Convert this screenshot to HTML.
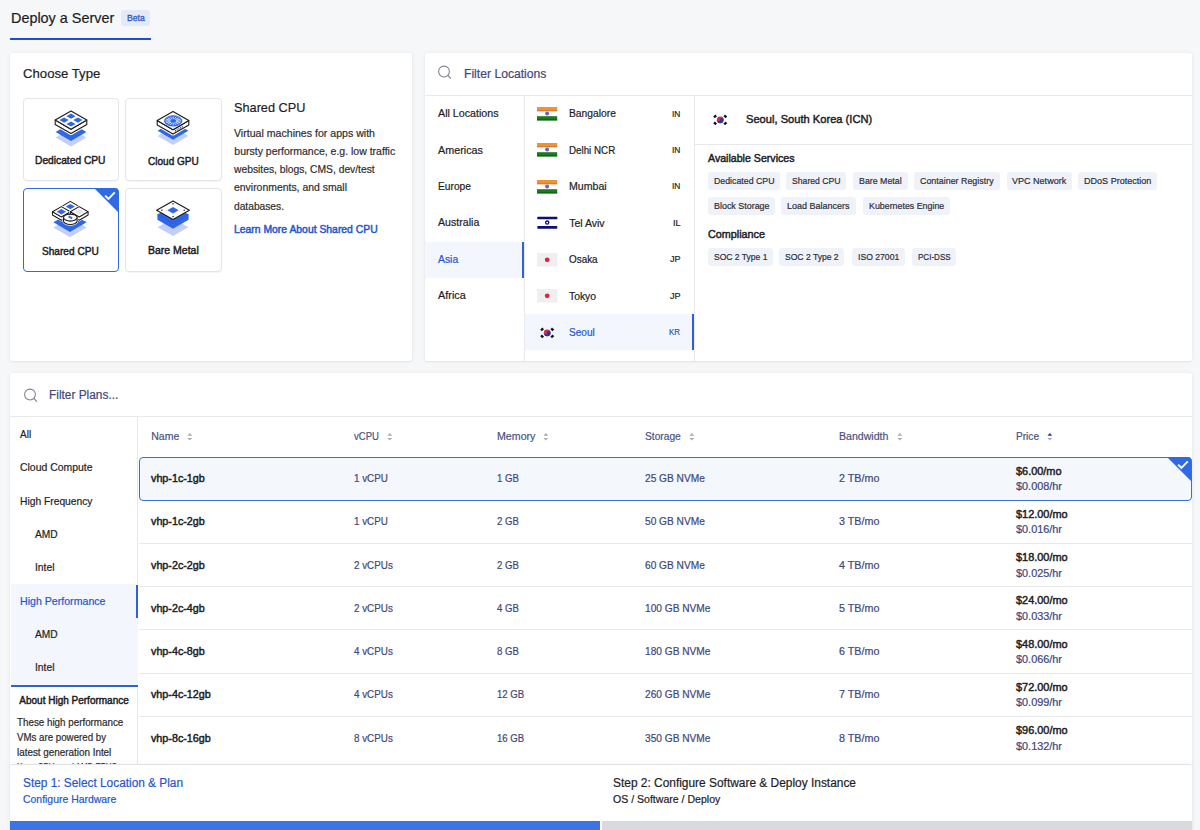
<!DOCTYPE html>
<html><head><meta charset="utf-8"><style>
html,body{margin:0;padding:0;}
body{width:1200px;height:830px;overflow:hidden;position:relative;background:#f6f7f9;font-family:"Liberation Sans",sans-serif;}
.t{position:absolute;white-space:nowrap;line-height:1;transform-origin:0 0;}
.b{position:absolute;box-sizing:border-box;}
svg{position:absolute;overflow:visible;}
</style></head><body>
<div class="t" style="left:10.70px;top:10.73px;font-size:14.5px;color:#1d1d1f;-webkit-text-stroke:0.2px #1d1d1f;transform:scaleX(0.9926);">Deploy a Server</div>
<div class="b" style="left:120.5px;top:10px;width:29.5px;height:16px;background:#e4e9f6;border-radius:3px;"></div>
<div class="t" style="left:126.80px;top:13.93px;font-size:9.3px;color:#2457c9;-webkit-text-stroke:0.3px #2457c9;transform:scaleX(0.9307);">Beta</div>
<div class="b" style="left:10px;top:37.6px;width:141px;height:2px;background:#1d4fd0;"></div>
<div class="b" style="left:10px;top:52.5px;width:402px;height:308px;background:#fff;border-radius:2px;box-shadow:0 0 5px rgba(0,0,0,.05),0 1px 2px rgba(0,0,0,.06),0 0 1px rgba(0,0,0,.06);"></div>
<div class="t" style="left:22.70px;top:67.07px;font-size:13.5px;color:#1d1d1f;-webkit-text-stroke:0.2px #1d1d1f;transform:scaleX(0.9746);">Choose Type</div>
<div class="b" style="left:22.5px;top:97.5px;width:96px;height:83.5px;background:#fff;border:1px solid #e4e5e9;border-radius:4px;box-shadow:0 1px 1px rgba(0,0,0,.04);"></div>
<div class="b" style="left:125.2px;top:97.5px;width:96.5px;height:83.5px;background:#fff;border:1px solid #e4e5e9;border-radius:4px;box-shadow:0 1px 1px rgba(0,0,0,.04);"></div>
<div class="b" style="left:22.5px;top:188px;width:96px;height:83.5px;background:#fff;border:1.5px solid #2f6ae6;border-radius:4px;"></div>
<div class="b" style="left:125.2px;top:188px;width:96.5px;height:83.5px;background:#fff;border:1px solid #e4e5e9;border-radius:4px;box-shadow:0 1px 1px rgba(0,0,0,.04);"></div>
<svg style="left:94.4px;top:187.5px" width="25" height="25" viewBox="0 0 25 25"><path d="M0 0 H20.5 Q24.5 0 24.5 4 V24.5 Z" fill="#2f6ae6"/><path d="M11.1 7.6 L14.4 10.8 L20.8 4.4" stroke="#fff" stroke-width="1.9" fill="none"/></svg>
<svg style="left:50.900000000000006px;top:110.0px" width="40" height="40" viewBox="-20 0 40 40"><path d="M-15.4 27.6 L0 18.6 L15.4 27.6 L0 36.6 Z" fill="#c3cff5"/><path d="M-15.4 22.0 L0 13.0 L15.4 22.0 L0 31.0 Z" fill="#2e68e8"/><path d="M-15.8 10.1 V14.5 L0 23.6 L15.8 14.5 V10.1 L0 1.0 Z" fill="#fff" stroke="#fff" stroke-width="3" stroke-linejoin="round"/><path d="M-15.8 10.1 V14.5 L0 23.6 L15.8 14.5 V10.1 L0 19.2 Z" fill="#fff" stroke="#1a1a1a" stroke-width="1.1" stroke-linejoin="round"/><path d="M0 1.0 L15.8 10.1 L0 19.2 L-15.8 10.1 Z" fill="#fff" stroke="#1a1a1a" stroke-width="1.1" stroke-linejoin="round"/><path d="M-4.6 6.199999999999999 L0 3.599999999999999 L4.6 6.199999999999999 L0 8.799999999999999 Z" fill="#2e68e8"/><path d="M-11.5 10.1 L-6.9 7.5 L-2.3000000000000007 10.1 L-6.9 12.7 Z" fill="#2e68e8"/><path d="M2.3000000000000007 10.1 L6.9 7.5 L11.5 10.1 L6.9 12.7 Z" fill="#2e68e8"/><path d="M-4.6 14.0 L0 11.4 L4.6 14.0 L0 16.6 Z" fill="#2e68e8"/></svg>
<svg style="left:152.7px;top:111.0px" width="40" height="40" viewBox="-20 0 40 40"><path d="M-15.4 25.1 L0 16.1 L15.4 25.1 L0 34.1 Z" fill="#c3cff5"/><path d="M-15.4 19.7 L0 10.7 L15.4 19.7 L0 28.7 Z" fill="#2e68e8"/><path d="M-15.8 9.6 V14.0 L0 23.1 L15.8 14.0 V9.6 L0 0.5 Z" fill="#fff" stroke="#fff" stroke-width="3" stroke-linejoin="round"/><path d="M-15.8 9.6 V14.0 L0 23.1 L15.8 14.0 V9.6 L0 18.7 Z" fill="#fff" stroke="#1a1a1a" stroke-width="1.1" stroke-linejoin="round"/><path d="M0 0.5 L15.8 9.6 L0 18.7 L-15.8 9.6 Z" fill="#fff" stroke="#1a1a1a" stroke-width="1.1" stroke-linejoin="round"/><ellipse cx="0.2" cy="9.9" rx="8.9" ry="5.3" fill="#2e68e8"/><ellipse cx="0.2" cy="9.9" rx="8.9" ry="5.3" fill="none" stroke="#1d4fc0" stroke-width="0.5"/><g stroke="#fff" stroke-width="0.75"><path d="M3.20 9.90 L8.10 9.90"/><path d="M2.97 10.59 L7.50 11.70"/><path d="M2.32 11.17 L5.79 13.22"/><path d="M1.35 11.56 L3.22 14.24"/><path d="M0.20 11.70 L0.20 14.60"/><path d="M-0.95 11.56 L-2.82 14.24"/><path d="M-1.92 11.17 L-5.39 13.22"/><path d="M-2.57 10.59 L-7.10 11.70"/><path d="M-2.80 9.90 L-7.70 9.90"/><path d="M-2.57 9.21 L-7.10 8.10"/><path d="M-1.92 8.63 L-5.39 6.58"/><path d="M-0.95 8.24 L-2.82 5.56"/><path d="M0.20 8.10 L0.20 5.20"/><path d="M1.35 8.24 L3.22 5.56"/><path d="M2.32 8.63 L5.79 6.58"/><path d="M2.97 9.21 L7.50 8.10"/></g><g stroke="#1a1a1a" stroke-width="0.7"><path d="M2.5 18.66 v2.0"/><path d="M4.2 17.68 v2.0"/><path d="M5.9 16.70 v2.0"/><path d="M7.6 15.72 v2.0"/><path d="M9.3 14.74 v2.0"/></g></svg>
<svg style="left:50.3px;top:199.5px" width="40" height="40" viewBox="-20 0 40 40"><path d="M-16.6 27.6 L0 18.0 L16.6 27.6 L0 37.2 Z" fill="#c3cff5"/><path d="M-16.6 22.3 L0 12.700000000000001 L16.6 22.3 L0 31.9 Z" fill="#2e68e8"/><path d="M-8.6 6.6 V9.8 L0.3 15.0 L9.200000000000001 9.8 V6.6 L0.3 1.3999999999999995 Z" fill="#fff" stroke="#fff" stroke-width="2.4"/><path d="M-8.6 6.6 V9.8 L0.3 15.0 L9.200000000000001 9.8 V6.6" fill="#fff" stroke="#1a1a1a" stroke-width="1.05" stroke-linejoin="round"/><path d="M0.3 1.3999999999999995 L9.200000000000001 6.6 L0.3 11.8 L-8.6 6.6 Z" fill="#fff" stroke="#1a1a1a" stroke-width="1.05" stroke-linejoin="round"/><path d="M-4.328 6.6 L0.3 3.8959999999999995 L4.928 6.6 L0.3 9.304 Z" fill="#2e68e8"/><path d="M-17.5 11.8 V15.0 L-8.6 20.2 L0.3000000000000007 15.0 V11.8 L-8.6 6.6000000000000005 Z" fill="#fff" stroke="#fff" stroke-width="2.4"/><path d="M-17.5 11.8 V15.0 L-8.6 20.2 L0.3000000000000007 15.0 V11.8" fill="#fff" stroke="#1a1a1a" stroke-width="1.05" stroke-linejoin="round"/><path d="M-8.6 6.6000000000000005 L0.3000000000000007 11.8 L-8.6 17.0 L-17.5 11.8 Z" fill="#fff" stroke="#1a1a1a" stroke-width="1.05" stroke-linejoin="round"/><path d="M-13.228 11.8 L-8.6 9.096 L-3.9719999999999995 11.8 L-8.6 14.504000000000001 Z" fill="#2e68e8"/><path d="M0.29999999999999893 11.8 V15.0 L9.2 20.2 L18.1 15.0 V11.8 L9.2 6.6000000000000005 Z" fill="#fff" stroke="#fff" stroke-width="2.4"/><path d="M0.29999999999999893 11.8 V15.0 L9.2 20.2 L18.1 15.0 V11.8" fill="#fff" stroke="#1a1a1a" stroke-width="1.05" stroke-linejoin="round"/><path d="M9.2 6.6000000000000005 L18.1 11.8 L9.2 17.0 L0.29999999999999893 11.8 Z" fill="#fff" stroke="#1a1a1a" stroke-width="1.05" stroke-linejoin="round"/><path d="M4.571999999999999 11.8 L9.2 9.096 L13.828 11.8 L9.2 14.504000000000001 Z" fill="#e6e6ea"/><path d="M-6.5 17.6 V21.0 A6.8 3.6 0 0 0 7.1 21.0 V17.6" fill="#fff" stroke="#fff" stroke-width="2.2"/><path d="M-6.5 17.6 V21.0 A6.8 3.6 0 0 0 7.1 21.0 V17.6" fill="#fff" stroke="#1a1a1a" stroke-width="1.05"/><ellipse cx="0.3" cy="17.6" rx="6.8" ry="3.5" fill="#fff" stroke="#1a1a1a" stroke-width="1.05"/><path d="M-1.4 16.4 L2.2 18.4" stroke="#2e68e8" stroke-width="1.8"/></svg>
<svg style="left:153.3px;top:200.0px" width="40" height="40" viewBox="-20 0 40 40"><path d="M-15.4 27.2 L0 18.4 L15.4 27.2 L0 36.0 Z" fill="#c3cff5"/><path d="M-15.6 14.6 V19.8 L0 28.8 L15.6 19.8 V14.6 L0 5.6 Z" fill="#2e68e8"/><path d="M-15.6 14.6 L0 23.6 L15.6 14.6" stroke="#2457d0" stroke-width="0.6" fill="none"/><path d="M0 0.9 L16.4 10.2 L0 19.5 L-16.4 10.2 Z" fill="#fff" stroke="#1a1a1a" stroke-width="1.1" stroke-linejoin="round"/><path d="M-5.6 10.2 L0 6.8999999999999995 L5.6 10.2 L0 13.5 Z" fill="#2e68e8"/><circle cx="0" cy="3.799999999999999" r="0.8" fill="#2a2f55"/><circle cx="-11.2" cy="10.2" r="0.8" fill="#2a2f55"/><circle cx="11.2" cy="10.2" r="0.8" fill="#2a2f55"/><circle cx="0" cy="16.6" r="0.8" fill="#2a2f55"/></svg>
<div class="t" style="left:35.00px;top:155.41px;font-size:10.5px;color:#1d1d1f;-webkit-text-stroke:0.45px #1d1d1f;transform:scaleX(0.9743);">Dedicated CPU</div>
<div class="t" style="left:148.00px;top:155.61px;font-size:10.5px;color:#1d1d1f;-webkit-text-stroke:0.45px #1d1d1f;transform:scaleX(0.9565);">Cloud GPU</div>
<div class="t" style="left:42.00px;top:245.61px;font-size:10.5px;color:#1d1d1f;-webkit-text-stroke:0.45px #1d1d1f;transform:scaleX(0.9620);">Shared CPU</div>
<div class="t" style="left:148.00px;top:245.41px;font-size:10.5px;color:#1d1d1f;-webkit-text-stroke:0.45px #1d1d1f;">Bare Metal</div>
<div class="t" style="left:234.30px;top:100.57px;font-size:13.5px;color:#1d1d1f;-webkit-text-stroke:0.2px #1d1d1f;transform:scaleX(0.9422);">Shared CPU</div>
<div class="t" style="left:234.30px;top:127.81px;font-size:10.5px;color:#2e2e2e;-webkit-text-stroke:0.2px #2e2e2e;transform:scaleX(1.0080);">Virtual machines for apps with</div>
<div class="t" style="left:234.30px;top:146.01px;font-size:10.5px;color:#2e2e2e;-webkit-text-stroke:0.2px #2e2e2e;">bursty performance, e.g. low traffic</div>
<div class="t" style="left:234.32px;top:164.21px;font-size:10.5px;color:#2e2e2e;-webkit-text-stroke:0.2px #2e2e2e;transform:scaleX(0.9800);">websites, blogs, CMS, dev/test</div>
<div class="t" style="left:234.30px;top:182.41px;font-size:10.5px;color:#2e2e2e;-webkit-text-stroke:0.2px #2e2e2e;transform:scaleX(0.9930);">environments, and small</div>
<div class="t" style="left:234.30px;top:200.61px;font-size:10.5px;color:#2e2e2e;-webkit-text-stroke:0.2px #2e2e2e;transform:scaleX(0.9732);">databases.</div>
<div class="t" style="left:234.30px;top:225.34px;font-size:10px;color:#1f56cc;-webkit-text-stroke:0.45px #1f56cc;transform:scaleX(1.0382);">Learn More About Shared CPU</div>
<div class="b" style="left:424.6px;top:52.5px;width:767.6px;height:308px;background:#fff;border-radius:2px;box-shadow:0 0 5px rgba(0,0,0,.05),0 1px 2px rgba(0,0,0,.06),0 0 1px rgba(0,0,0,.06);"></div>
<svg style="left:438.3px;top:66.3px" width="14" height="14" viewBox="0 0 14 14"><circle cx="6.0" cy="5.5" r="5.4" stroke="#7d8194" stroke-width="1.05" fill="none"/><path d="M9.9 9.5 L13.0 12.7" stroke="#7d8194" stroke-width="1.1"/></svg>
<div class="t" style="left:463.90px;top:67.54px;font-size:12px;color:#41477a;-webkit-text-stroke:0.2px #41477a;transform:scaleX(1.0126);">Filter Locations</div>
<div class="b" style="left:424.6px;top:94.5px;width:767.6px;height:1px;background:#e8e9eb;"></div>
<div class="b" style="left:523.5px;top:95px;width:1px;height:265.5px;background:#e8e9eb;"></div>
<div class="b" style="left:694.2px;top:95px;width:1px;height:265.5px;background:#e8e9eb;"></div>
<div class="b" style="left:424.6px;top:241.7px;width:99.4px;height:36.4px;background:#f3f6fc;"></div>
<div class="b" style="left:522px;top:241.7px;width:2px;height:36.4px;background:#2f62d6;"></div>
<div class="t" style="left:437.60px;top:108.11px;font-size:10.5px;color:#1d1d1f;-webkit-text-stroke:0.2px #1d1d1f;transform:scaleX(1.0180);">All Locations</div>
<div class="t" style="left:437.60px;top:144.56px;font-size:10.5px;color:#1d1d1f;-webkit-text-stroke:0.2px #1d1d1f;transform:scaleX(1.0259);">Americas</div>
<div class="t" style="left:437.60px;top:181.01px;font-size:10.5px;color:#1d1d1f;-webkit-text-stroke:0.2px #1d1d1f;transform:scaleX(0.9746);">Europe</div>
<div class="t" style="left:437.60px;top:217.46px;font-size:10.5px;color:#1d1d1f;-webkit-text-stroke:0.2px #1d1d1f;transform:scaleX(1.0108);">Australia</div>
<div class="t" style="left:437.60px;top:253.91px;font-size:10.5px;color:#1f56cc;-webkit-text-stroke:0.2px #1f56cc;transform:scaleX(0.9884);">Asia</div>
<div class="t" style="left:437.60px;top:290.36px;font-size:10.5px;color:#1d1d1f;-webkit-text-stroke:0.2px #1d1d1f;transform:scaleX(1.0356);">Africa</div>
<div class="b" style="left:525px;top:314px;width:169px;height:36.2px;background:#f3f6fc;"></div>
<div class="b" style="left:692.2px;top:314px;width:2px;height:36.2px;background:#2f62d6;"></div>
<svg style="left:536.6px;top:106.9px" width="21" height="14" viewBox="0 0 21 14"><rect x="0" y="0" width="20.2" height="4.2" fill="#ee9238"/><rect x="0" y="3.2" width="20.2" height="1" fill="#d97a22"/><rect x="0" y="9.2" width="20.2" height="4.2" fill="#1b7a1e"/><rect x="0" y="12.4" width="20.2" height="1" fill="#0c5a10"/><circle cx="10.1" cy="6.6" r="2.0" fill="#6a64c4"/></svg>
<div class="t" style="left:569.20px;top:108.31px;font-size:10.5px;color:#1d1d1f;-webkit-text-stroke:0.2px #1d1d1f;transform:scaleX(0.9796);">Bangalore</div>
<div class="t" style="left:672.00px;top:109.58px;font-size:9px;color:#1d1d1f;-webkit-text-stroke:0.2px #1d1d1f;transform:scaleX(0.9333);">IN</div>
<svg style="left:536.6px;top:143.35px" width="21" height="14" viewBox="0 0 21 14"><rect x="0" y="0" width="20.2" height="4.2" fill="#ee9238"/><rect x="0" y="3.2" width="20.2" height="1" fill="#d97a22"/><rect x="0" y="9.2" width="20.2" height="4.2" fill="#1b7a1e"/><rect x="0" y="12.4" width="20.2" height="1" fill="#0c5a10"/><circle cx="10.1" cy="6.6" r="2.0" fill="#6a64c4"/></svg>
<div class="t" style="left:569.20px;top:144.76px;font-size:10.5px;color:#1d1d1f;-webkit-text-stroke:0.2px #1d1d1f;transform:scaleX(0.9316);">Delhi NCR</div>
<div class="t" style="left:672.00px;top:146.03px;font-size:9px;color:#1d1d1f;-webkit-text-stroke:0.2px #1d1d1f;transform:scaleX(0.9333);">IN</div>
<svg style="left:536.6px;top:179.8px" width="21" height="14" viewBox="0 0 21 14"><rect x="0" y="0" width="20.2" height="4.2" fill="#ee9238"/><rect x="0" y="3.2" width="20.2" height="1" fill="#d97a22"/><rect x="0" y="9.2" width="20.2" height="4.2" fill="#1b7a1e"/><rect x="0" y="12.4" width="20.2" height="1" fill="#0c5a10"/><circle cx="10.1" cy="6.6" r="2.0" fill="#6a64c4"/></svg>
<div class="t" style="left:569.20px;top:181.21px;font-size:10.5px;color:#1d1d1f;-webkit-text-stroke:0.2px #1d1d1f;transform:scaleX(1.0095);">Mumbai</div>
<div class="t" style="left:672.00px;top:182.48px;font-size:9px;color:#1d1d1f;-webkit-text-stroke:0.2px #1d1d1f;transform:scaleX(0.9333);">IN</div>
<svg style="left:536.6px;top:216.25px" width="21" height="14" viewBox="0 0 21 14"><rect x="0.3" y="0.7" width="20" height="2.6" rx="0.6" fill="#0d0f78"/><rect x="0.3" y="10.1" width="20" height="2.6" rx="0.6" fill="#0d0f78"/><circle cx="10.2" cy="6.6" r="1.6" stroke="#0d0f78" stroke-width="1.3" fill="none"/></svg>
<div class="t" style="left:569.20px;top:217.66px;font-size:10.5px;color:#1d1d1f;-webkit-text-stroke:0.2px #1d1d1f;">Tel Aviv</div>
<div class="t" style="left:672.80px;top:218.93px;font-size:9px;color:#1d1d1f;-webkit-text-stroke:0.2px #1d1d1f;transform:scaleX(1.0133);">IL</div>
<svg style="left:536.6px;top:252.7px" width="21" height="14" viewBox="0 0 21 14"><rect x="0" y="0" width="20.5" height="13.6" fill="#efeff1"/><circle cx="10.2" cy="6.8" r="2.4" fill="#d9273e"/></svg>
<div class="t" style="left:569.20px;top:254.11px;font-size:10.5px;color:#1d1d1f;-webkit-text-stroke:0.2px #1d1d1f;transform:scaleX(0.9425);">Osaka</div>
<div class="t" style="left:669.80px;top:255.38px;font-size:9px;color:#1d1d1f;-webkit-text-stroke:0.2px #1d1d1f;transform:scaleX(1.0095);">JP</div>
<svg style="left:536.6px;top:289.15px" width="21" height="14" viewBox="0 0 21 14"><rect x="0" y="0" width="20.5" height="13.6" fill="#efeff1"/><circle cx="10.2" cy="6.8" r="2.4" fill="#d9273e"/></svg>
<div class="t" style="left:569.20px;top:290.56px;font-size:10.5px;color:#1d1d1f;-webkit-text-stroke:0.2px #1d1d1f;transform:scaleX(0.9846);">Tokyo</div>
<div class="t" style="left:669.80px;top:291.83px;font-size:9px;color:#1d1d1f;-webkit-text-stroke:0.2px #1d1d1f;transform:scaleX(1.0095);">JP</div>
<svg style="left:536.6px;top:325.6px" width="21" height="14" viewBox="0 0 21 14"><circle cx="10.2" cy="6.8" r="3.4" fill="#d52b3c"/><path d="M6.8 6.8 A3.4 3.4 0 0 0 13.6 6.8 A1.7 1.7 0 0 0 10.2 6.8 A1.7 1.7 0 0 1 6.8 6.8Z" fill="#1f3a9a"/><g stroke="#15152a" stroke-width="2.4"><path d="M4.0 4.3 L6.2 2.3"/><path d="M14.2 2.3 L16.4 4.3"/><path d="M4.0 9.3 L6.2 11.3"/><path d="M14.2 11.3 L16.4 9.3"/></g></svg>
<div class="t" style="left:569.20px;top:327.01px;font-size:10.5px;color:#1f56cc;-webkit-text-stroke:0.2px #1f56cc;transform:scaleX(0.9606);">Seoul</div>
<div class="t" style="left:669.40px;top:328.28px;font-size:9px;color:#1f56cc;-webkit-text-stroke:0.2px #1f56cc;transform:scaleX(0.8800);">KR</div>
<div class="b" style="left:695px;top:143.8px;width:497px;height:1px;background:#e8e9eb;"></div>
<svg style="left:710.3px;top:112.8px" width="21" height="14" viewBox="0 0 21 14"><circle cx="10.2" cy="6.8" r="3.4" fill="#d52b3c"/><path d="M6.8 6.8 A3.4 3.4 0 0 0 13.6 6.8 A1.7 1.7 0 0 0 10.2 6.8 A1.7 1.7 0 0 1 6.8 6.8Z" fill="#1f3a9a"/><g stroke="#15152a" stroke-width="2.4"><path d="M4.0 4.3 L6.2 2.3"/><path d="M14.2 2.3 L16.4 4.3"/><path d="M4.0 9.3 L6.2 11.3"/><path d="M14.2 11.3 L16.4 9.3"/></g></svg>
<div class="t" style="left:746.30px;top:114.21px;font-size:11.8px;color:#1d1d1f;-webkit-text-stroke:0.45px #1d1d1f;transform:scaleX(0.9434);">Seoul, South Korea (ICN)</div>
<div class="t" style="left:707.50px;top:153.11px;font-size:10.5px;color:#1d1d1f;-webkit-text-stroke:0.45px #1d1d1f;transform:scaleX(1.0106);">Available Services</div>
<div class="b" style="left:707.8px;top:172.3px;width:72.20000000000005px;height:18px;background:#f0f2fa;border-radius:3px;"></div>
<div class="t" style="left:713.60px;top:176.32px;font-size:9.9px;color:#2b2c36;-webkit-text-stroke:0.2px #2b2c36;transform:scaleX(0.8889);">Dedicated CPU</div>
<div class="b" style="left:786.3px;top:172.3px;width:60.200000000000045px;height:18px;background:#f0f2fa;border-radius:3px;"></div>
<div class="t" style="left:792.10px;top:176.32px;font-size:9.9px;color:#2b2c36;-webkit-text-stroke:0.2px #2b2c36;transform:scaleX(0.8752);">Shared CPU</div>
<div class="b" style="left:853.3px;top:172.3px;width:54.30000000000007px;height:18px;background:#f0f2fa;border-radius:3px;"></div>
<div class="t" style="left:859.10px;top:176.32px;font-size:9.9px;color:#2b2c36;-webkit-text-stroke:0.2px #2b2c36;transform:scaleX(0.8928);">Bare Metal</div>
<div class="b" style="left:914.4px;top:172.3px;width:85.30000000000007px;height:18px;background:#f0f2fa;border-radius:3px;"></div>
<div class="t" style="left:920.20px;top:176.32px;font-size:9.9px;color:#2b2c36;-webkit-text-stroke:0.2px #2b2c36;transform:scaleX(0.8998);">Container Registry</div>
<div class="b" style="left:1006.6px;top:172.3px;width:65.89999999999998px;height:18px;background:#f0f2fa;border-radius:3px;"></div>
<div class="t" style="left:1012.40px;top:176.32px;font-size:9.9px;color:#2b2c36;-webkit-text-stroke:0.2px #2b2c36;transform:scaleX(0.9145);">VPC Network</div>
<div class="b" style="left:1078.4px;top:172.3px;width:79.09999999999991px;height:18px;background:#f0f2fa;border-radius:3px;"></div>
<div class="t" style="left:1084.20px;top:176.32px;font-size:9.9px;color:#2b2c36;-webkit-text-stroke:0.2px #2b2c36;transform:scaleX(0.9164);">DDoS Protection</div>
<div class="b" style="left:707.8px;top:196.6px;width:67.20000000000005px;height:18px;background:#f0f2fa;border-radius:3px;"></div>
<div class="t" style="left:713.60px;top:200.62px;font-size:9.9px;color:#2b2c36;-webkit-text-stroke:0.2px #2b2c36;transform:scaleX(0.9029);">Block Storage</div>
<div class="b" style="left:781.4px;top:196.6px;width:74.30000000000007px;height:18px;background:#f0f2fa;border-radius:3px;"></div>
<div class="t" style="left:787.20px;top:200.62px;font-size:9.9px;color:#2b2c36;-webkit-text-stroke:0.2px #2b2c36;transform:scaleX(0.9122);">Load Balancers</div>
<div class="b" style="left:862.8px;top:196.6px;width:87.0px;height:18px;background:#f0f2fa;border-radius:3px;"></div>
<div class="t" style="left:868.60px;top:200.62px;font-size:9.9px;color:#2b2c36;-webkit-text-stroke:0.2px #2b2c36;transform:scaleX(0.8961);">Kubernetes Engine</div>
<div class="t" style="left:707.50px;top:229.01px;font-size:10.5px;color:#1d1d1f;-webkit-text-stroke:0.45px #1d1d1f;transform:scaleX(1.0282);">Compliance</div>
<div class="b" style="left:707.8px;top:247.8px;width:65.10000000000002px;height:18px;background:#f0f2fa;border-radius:3px;"></div>
<div class="t" style="left:713.60px;top:251.82px;font-size:9.9px;color:#2b2c36;-webkit-text-stroke:0.2px #2b2c36;transform:scaleX(0.8638);">SOC 2 Type 1</div>
<div class="b" style="left:779px;top:247.8px;width:65.29999999999995px;height:18px;background:#f0f2fa;border-radius:3px;"></div>
<div class="t" style="left:784.80px;top:251.82px;font-size:9.9px;color:#2b2c36;-webkit-text-stroke:0.2px #2b2c36;transform:scaleX(0.8670);">SOC 2 Type 2</div>
<div class="b" style="left:851.8px;top:247.8px;width:52.90000000000009px;height:18px;background:#f0f2fa;border-radius:3px;"></div>
<div class="t" style="left:857.60px;top:251.82px;font-size:9.9px;color:#2b2c36;-webkit-text-stroke:0.2px #2b2c36;transform:scaleX(0.8732);">ISO 27001</div>
<div class="b" style="left:912px;top:247.8px;width:44.299999999999955px;height:18px;background:#f0f2fa;border-radius:3px;"></div>
<div class="t" style="left:917.80px;top:251.82px;font-size:9.9px;color:#2b2c36;-webkit-text-stroke:0.2px #2b2c36;transform:scaleX(0.8150);">PCI-DSS</div>
<div class="b" style="left:10px;top:373px;width:1182.2px;height:470px;background:#fff;border-radius:2px;box-shadow:0 0 5px rgba(0,0,0,.05),0 1px 2px rgba(0,0,0,.06),0 0 1px rgba(0,0,0,.06);"></div>
<svg style="left:23.8px;top:388.9px" width="14" height="14" viewBox="0 0 14 14"><circle cx="6.0" cy="5.5" r="5.4" stroke="#7d8194" stroke-width="1.05" fill="none"/><path d="M9.9 9.5 L13.0 12.7" stroke="#7d8194" stroke-width="1.1"/></svg>
<div class="t" style="left:49.20px;top:389.14px;font-size:12px;color:#41477a;-webkit-text-stroke:0.2px #41477a;transform:scaleX(0.9898);">Filter Plans...</div>
<div class="b" style="left:10px;top:416.2px;width:1182.2px;height:1px;background:#e8e9eb;"></div>
<div class="b" style="left:137px;top:417px;width:1px;height:413px;background:#e8e9eb;"></div>
<div class="b" style="left:10.5px;top:584.3px;width:127px;height:101px;background:#f3f6fc;"></div>
<div class="b" style="left:136px;top:585px;width:2px;height:33.3px;background:#2f62d6;"></div>
<div class="b" style="left:10.5px;top:684.7px;width:127.5px;height:2px;background:#2f62d6;"></div>
<div class="t" style="left:20.00px;top:429.11px;font-size:10.5px;color:#1d1d1f;-webkit-text-stroke:0.2px #1d1d1f;transform:scaleX(0.9510);">All</div>
<div class="t" style="left:20.00px;top:462.44px;font-size:10.5px;color:#1d1d1f;-webkit-text-stroke:0.2px #1d1d1f;transform:scaleX(0.9938);">Cloud Compute</div>
<div class="t" style="left:20.00px;top:495.77px;font-size:10.5px;color:#1d1d1f;-webkit-text-stroke:0.2px #1d1d1f;transform:scaleX(0.9781);">High Frequency</div>
<div class="t" style="left:35.10px;top:529.10px;font-size:10.5px;color:#1d1d1f;-webkit-text-stroke:0.2px #1d1d1f;transform:scaleX(0.9731);">AMD</div>
<div class="t" style="left:35.40px;top:562.43px;font-size:10.5px;color:#1d1d1f;-webkit-text-stroke:0.2px #1d1d1f;transform:scaleX(0.9827);">Intel</div>
<div class="t" style="left:20.00px;top:595.76px;font-size:10.5px;color:#1f56cc;-webkit-text-stroke:0.2px #1f56cc;transform:scaleX(1.0103);">High Performance</div>
<div class="t" style="left:35.10px;top:629.09px;font-size:10.5px;color:#1d1d1f;-webkit-text-stroke:0.2px #1d1d1f;transform:scaleX(0.9731);">AMD</div>
<div class="t" style="left:35.40px;top:662.42px;font-size:10.5px;color:#1d1d1f;-webkit-text-stroke:0.2px #1d1d1f;transform:scaleX(0.9827);">Intel</div>
<div class="t" style="left:19.30px;top:696.13px;font-size:10px;color:#1d1d1f;-webkit-text-stroke:0.45px #1d1d1f;">About High Performance</div>
<div class="t" style="left:17.00px;top:717.93px;font-size:10px;color:#2b2b2b;-webkit-text-stroke:0.2px #2b2b2b;transform:scaleX(0.9807);">These high performance</div>
<div class="t" style="left:17.00px;top:732.98px;font-size:10px;color:#2b2b2b;-webkit-text-stroke:0.2px #2b2b2b;transform:scaleX(0.9705);">VMs are powered by</div>
<div class="t" style="left:17.00px;top:748.03px;font-size:10px;color:#2b2b2b;-webkit-text-stroke:0.2px #2b2b2b;transform:scaleX(0.9861);">latest generation Intel</div>
<div class="t" style="left:17.00px;top:763.08px;font-size:10px;color:#2b2b2b;-webkit-text-stroke:0.2px #2b2b2b;transform:scaleX(0.7926);">Xeon CPUs and AMD EPYC</div>
<div class="t" style="left:151.25px;top:431.21px;font-size:10.5px;color:#4c5281;-webkit-text-stroke:0.2px #4c5281;">Name</div>
<svg style="left:187.2px;top:432px" width="6" height="10" viewBox="0 0 6 10"><path d="M0.4 3.7 L2.8 1.0 L5.2 3.7 Z" fill="#a9acb8"/><path d="M0.4 5.9 L2.8 8.6 L5.2 5.9 Z" fill="#a9acb8"/></svg>
<div class="t" style="left:353.75px;top:431.21px;font-size:10.5px;color:#4c5281;-webkit-text-stroke:0.2px #4c5281;transform:scaleX(0.9117);">vCPU</div>
<svg style="left:387.2px;top:432px" width="6" height="10" viewBox="0 0 6 10"><path d="M0.4 3.7 L2.8 1.0 L5.2 3.7 Z" fill="#a9acb8"/><path d="M0.4 5.9 L2.8 8.6 L5.2 5.9 Z" fill="#a9acb8"/></svg>
<div class="t" style="left:496.60px;top:431.21px;font-size:10.5px;color:#4c5281;-webkit-text-stroke:0.2px #4c5281;transform:scaleX(1.0126);">Memory</div>
<svg style="left:543.3000000000001px;top:432px" width="6" height="10" viewBox="0 0 6 10"><path d="M0.4 3.7 L2.8 1.0 L5.2 3.7 Z" fill="#a9acb8"/><path d="M0.4 5.9 L2.8 8.6 L5.2 5.9 Z" fill="#a9acb8"/></svg>
<div class="t" style="left:645.20px;top:431.21px;font-size:10.5px;color:#4c5281;-webkit-text-stroke:0.2px #4c5281;transform:scaleX(0.9733);">Storage</div>
<svg style="left:689.3000000000001px;top:432px" width="6" height="10" viewBox="0 0 6 10"><path d="M0.4 3.7 L2.8 1.0 L5.2 3.7 Z" fill="#a9acb8"/><path d="M0.4 5.9 L2.8 8.6 L5.2 5.9 Z" fill="#a9acb8"/></svg>
<div class="t" style="left:839.00px;top:431.21px;font-size:10.5px;color:#4c5281;-webkit-text-stroke:0.2px #4c5281;transform:scaleX(1.0075);">Bandwidth</div>
<svg style="left:896.7px;top:432px" width="6" height="10" viewBox="0 0 6 10"><path d="M0.4 3.7 L2.8 1.0 L5.2 3.7 Z" fill="#a9acb8"/><path d="M0.4 5.9 L2.8 8.6 L5.2 5.9 Z" fill="#a9acb8"/></svg>
<div class="t" style="left:1015.60px;top:431.21px;font-size:10.5px;color:#4c5281;-webkit-text-stroke:0.2px #4c5281;transform:scaleX(0.9615);">Price</div>
<svg style="left:1047.3px;top:432px" width="6" height="10" viewBox="0 0 6 10"><path d="M0.4 3.7 L2.8 1.0 L5.2 3.7 Z" fill="#2338a8"/><path d="M0.4 5.9 L2.8 8.6 L5.2 5.9 Z" fill="#a9acb8"/></svg>
<div class="b" style="left:138.5px;top:543px;width:1053.7px;height:1px;background:#e8e9eb;"></div>
<div class="b" style="left:138.5px;top:586.2px;width:1053.7px;height:1px;background:#e8e9eb;"></div>
<div class="b" style="left:138.5px;top:629.4px;width:1053.7px;height:1px;background:#e8e9eb;"></div>
<div class="b" style="left:138.5px;top:672.6px;width:1053.7px;height:1px;background:#e8e9eb;"></div>
<div class="b" style="left:138.5px;top:715.8px;width:1053.7px;height:1px;background:#e8e9eb;"></div>
<div class="b" style="left:138.7px;top:457px;width:1053.3px;height:43.6px;background:#f4f7fb;border:1.5px solid #3c6fd6;border-radius:4px;"></div>
<svg style="left:1167px;top:457px" width="25" height="25" viewBox="0 0 25 25"><path d="M0 0 H20.5 Q24.5 0 24.5 4 V24.5 Z" fill="#2f6ae6"/><path d="M11.1 7.6 L14.4 10.8 L20.8 4.4" stroke="#fff" stroke-width="1.9" fill="none"/></svg>
<div class="t" style="left:151.25px;top:473.03px;font-size:10.6px;color:#1d1d1f;-webkit-text-stroke:0.45px #1d1d1f;transform:scaleX(1.0148);">vhp-1c-1gb</div>
<div class="t" style="left:353.75px;top:473.03px;font-size:10.6px;color:#41477a;-webkit-text-stroke:0.2px #41477a;transform:scaleX(0.9280);">1 vCPU</div>
<div class="t" style="left:496.60px;top:473.03px;font-size:10.6px;color:#41477a;-webkit-text-stroke:0.2px #41477a;transform:scaleX(0.9041);">1 GB</div>
<div class="t" style="left:645.20px;top:473.03px;font-size:10.6px;color:#41477a;-webkit-text-stroke:0.2px #41477a;transform:scaleX(0.9584);">25 GB NVMe</div>
<div class="t" style="left:839.00px;top:473.03px;font-size:10.6px;color:#41477a;-webkit-text-stroke:0.2px #41477a;transform:scaleX(1.0136);">2 TB/mo</div>
<div class="t" style="left:1015.60px;top:465.63px;font-size:10.6px;color:#1d1d1f;-webkit-text-stroke:0.45px #1d1d1f;transform:scaleX(1.0304);">$6.00/mo</div>
<div class="t" style="left:1015.60px;top:481.03px;font-size:10.6px;color:#41477a;-webkit-text-stroke:0.2px #41477a;transform:scaleX(1.0275);">$0.008/hr</div>
<div class="t" style="left:151.25px;top:516.30px;font-size:10.6px;color:#1d1d1f;-webkit-text-stroke:0.45px #1d1d1f;transform:scaleX(1.0148);">vhp-1c-2gb</div>
<div class="t" style="left:353.75px;top:516.30px;font-size:10.6px;color:#41477a;-webkit-text-stroke:0.2px #41477a;transform:scaleX(0.9280);">1 vCPU</div>
<div class="t" style="left:496.60px;top:516.30px;font-size:10.6px;color:#41477a;-webkit-text-stroke:0.2px #41477a;transform:scaleX(0.9041);">2 GB</div>
<div class="t" style="left:645.20px;top:516.30px;font-size:10.6px;color:#41477a;-webkit-text-stroke:0.2px #41477a;transform:scaleX(0.9584);">50 GB NVMe</div>
<div class="t" style="left:839.00px;top:516.30px;font-size:10.6px;color:#41477a;-webkit-text-stroke:0.2px #41477a;transform:scaleX(1.0136);">3 TB/mo</div>
<div class="t" style="left:1015.60px;top:508.90px;font-size:10.6px;color:#1d1d1f;-webkit-text-stroke:0.45px #1d1d1f;transform:scaleX(1.0302);">$12.00/mo</div>
<div class="t" style="left:1015.60px;top:524.30px;font-size:10.6px;color:#41477a;-webkit-text-stroke:0.2px #41477a;transform:scaleX(1.0275);">$0.016/hr</div>
<div class="t" style="left:151.25px;top:559.57px;font-size:10.6px;color:#1d1d1f;-webkit-text-stroke:0.45px #1d1d1f;transform:scaleX(1.0148);">vhp-2c-2gb</div>
<div class="t" style="left:353.75px;top:559.57px;font-size:10.6px;color:#41477a;-webkit-text-stroke:0.2px #41477a;transform:scaleX(0.9282);">2 vCPUs</div>
<div class="t" style="left:496.60px;top:559.57px;font-size:10.6px;color:#41477a;-webkit-text-stroke:0.2px #41477a;transform:scaleX(0.9041);">2 GB</div>
<div class="t" style="left:645.20px;top:559.57px;font-size:10.6px;color:#41477a;-webkit-text-stroke:0.2px #41477a;transform:scaleX(0.9584);">60 GB NVMe</div>
<div class="t" style="left:839.00px;top:559.57px;font-size:10.6px;color:#41477a;-webkit-text-stroke:0.2px #41477a;transform:scaleX(1.0136);">4 TB/mo</div>
<div class="t" style="left:1015.60px;top:552.17px;font-size:10.6px;color:#1d1d1f;-webkit-text-stroke:0.45px #1d1d1f;transform:scaleX(1.0302);">$18.00/mo</div>
<div class="t" style="left:1015.60px;top:567.57px;font-size:10.6px;color:#41477a;-webkit-text-stroke:0.2px #41477a;transform:scaleX(1.0275);">$0.025/hr</div>
<div class="t" style="left:151.25px;top:602.84px;font-size:10.6px;color:#1d1d1f;-webkit-text-stroke:0.45px #1d1d1f;transform:scaleX(1.0148);">vhp-2c-4gb</div>
<div class="t" style="left:353.75px;top:602.84px;font-size:10.6px;color:#41477a;-webkit-text-stroke:0.2px #41477a;transform:scaleX(0.9282);">2 vCPUs</div>
<div class="t" style="left:496.60px;top:602.84px;font-size:10.6px;color:#41477a;-webkit-text-stroke:0.2px #41477a;transform:scaleX(0.9041);">4 GB</div>
<div class="t" style="left:645.20px;top:602.84px;font-size:10.6px;color:#41477a;-webkit-text-stroke:0.2px #41477a;transform:scaleX(0.9585);">100 GB NVMe</div>
<div class="t" style="left:839.00px;top:602.84px;font-size:10.6px;color:#41477a;-webkit-text-stroke:0.2px #41477a;transform:scaleX(1.0136);">5 TB/mo</div>
<div class="t" style="left:1015.60px;top:595.44px;font-size:10.6px;color:#1d1d1f;-webkit-text-stroke:0.45px #1d1d1f;transform:scaleX(1.0302);">$24.00/mo</div>
<div class="t" style="left:1015.60px;top:610.84px;font-size:10.6px;color:#41477a;-webkit-text-stroke:0.2px #41477a;transform:scaleX(1.0275);">$0.033/hr</div>
<div class="t" style="left:151.25px;top:646.11px;font-size:10.6px;color:#1d1d1f;-webkit-text-stroke:0.45px #1d1d1f;transform:scaleX(1.0148);">vhp-4c-8gb</div>
<div class="t" style="left:353.75px;top:646.11px;font-size:10.6px;color:#41477a;-webkit-text-stroke:0.2px #41477a;transform:scaleX(0.9282);">4 vCPUs</div>
<div class="t" style="left:496.60px;top:646.11px;font-size:10.6px;color:#41477a;-webkit-text-stroke:0.2px #41477a;transform:scaleX(0.9041);">8 GB</div>
<div class="t" style="left:645.20px;top:646.11px;font-size:10.6px;color:#41477a;-webkit-text-stroke:0.2px #41477a;transform:scaleX(0.9585);">180 GB NVMe</div>
<div class="t" style="left:839.00px;top:646.11px;font-size:10.6px;color:#41477a;-webkit-text-stroke:0.2px #41477a;transform:scaleX(1.0136);">6 TB/mo</div>
<div class="t" style="left:1015.60px;top:638.71px;font-size:10.6px;color:#1d1d1f;-webkit-text-stroke:0.45px #1d1d1f;transform:scaleX(1.0302);">$48.00/mo</div>
<div class="t" style="left:1015.60px;top:654.11px;font-size:10.6px;color:#41477a;-webkit-text-stroke:0.2px #41477a;transform:scaleX(1.0275);">$0.066/hr</div>
<div class="t" style="left:151.25px;top:689.38px;font-size:10.6px;color:#1d1d1f;-webkit-text-stroke:0.45px #1d1d1f;transform:scaleX(1.0146);">vhp-4c-12gb</div>
<div class="t" style="left:353.75px;top:689.38px;font-size:10.6px;color:#41477a;-webkit-text-stroke:0.2px #41477a;transform:scaleX(0.9282);">4 vCPUs</div>
<div class="t" style="left:496.60px;top:689.38px;font-size:10.6px;color:#41477a;-webkit-text-stroke:0.2px #41477a;transform:scaleX(0.9039);">12 GB</div>
<div class="t" style="left:645.20px;top:689.38px;font-size:10.6px;color:#41477a;-webkit-text-stroke:0.2px #41477a;transform:scaleX(0.9585);">260 GB NVMe</div>
<div class="t" style="left:839.00px;top:689.38px;font-size:10.6px;color:#41477a;-webkit-text-stroke:0.2px #41477a;transform:scaleX(1.0136);">7 TB/mo</div>
<div class="t" style="left:1015.60px;top:681.98px;font-size:10.6px;color:#1d1d1f;-webkit-text-stroke:0.45px #1d1d1f;transform:scaleX(1.0302);">$72.00/mo</div>
<div class="t" style="left:1015.60px;top:697.38px;font-size:10.6px;color:#41477a;-webkit-text-stroke:0.2px #41477a;transform:scaleX(1.0275);">$0.099/hr</div>
<div class="t" style="left:151.25px;top:732.65px;font-size:10.6px;color:#1d1d1f;-webkit-text-stroke:0.45px #1d1d1f;transform:scaleX(1.0146);">vhp-8c-16gb</div>
<div class="t" style="left:353.75px;top:732.65px;font-size:10.6px;color:#41477a;-webkit-text-stroke:0.2px #41477a;transform:scaleX(0.9282);">8 vCPUs</div>
<div class="t" style="left:496.60px;top:732.65px;font-size:10.6px;color:#41477a;-webkit-text-stroke:0.2px #41477a;transform:scaleX(0.9039);">16 GB</div>
<div class="t" style="left:645.20px;top:732.65px;font-size:10.6px;color:#41477a;-webkit-text-stroke:0.2px #41477a;transform:scaleX(0.9585);">350 GB NVMe</div>
<div class="t" style="left:839.00px;top:732.65px;font-size:10.6px;color:#41477a;-webkit-text-stroke:0.2px #41477a;transform:scaleX(1.0136);">8 TB/mo</div>
<div class="t" style="left:1015.60px;top:725.25px;font-size:10.6px;color:#1d1d1f;-webkit-text-stroke:0.45px #1d1d1f;transform:scaleX(1.0302);">$96.00/mo</div>
<div class="t" style="left:1015.60px;top:740.65px;font-size:10.6px;color:#41477a;-webkit-text-stroke:0.2px #41477a;transform:scaleX(1.0275);">$0.132/hr</div>
<div class="b" style="left:10px;top:764px;width:1182.2px;height:70px;background:#fff;border-top:1px solid #e2e2e4;border-radius:3px 3px 0 0;box-shadow:0 -3px 6px rgba(0,0,0,.025);"></div>
<div class="b" style="left:10px;top:821px;width:590px;height:9px;background:#3a74e6;"></div>
<div class="b" style="left:602px;top:821px;width:590.2px;height:9px;background:#d8dadf;"></div>
<div class="t" style="left:23.00px;top:777.24px;font-size:12px;color:#1f56cc;-webkit-text-stroke:0.2px #1f56cc;transform:scaleX(0.9870);">Step 1: Select Location &amp; Plan</div>
<div class="t" style="left:23.00px;top:793.51px;font-size:10.5px;color:#1f56cc;-webkit-text-stroke:0.2px #1f56cc;transform:scaleX(0.9939);">Configure Hardware</div>
<div class="t" style="left:613.25px;top:776.84px;font-size:12px;color:#1d1d1f;-webkit-text-stroke:0.2px #1d1d1f;transform:scaleX(0.9926);">Step 2: Configure Software &amp; Deploy Instance</div>
<div class="t" style="left:613.25px;top:794.11px;font-size:10.5px;color:#1d1d1f;-webkit-text-stroke:0.2px #1d1d1f;transform:scaleX(1.0047);">OS / Software / Deploy</div>
</body></html>
